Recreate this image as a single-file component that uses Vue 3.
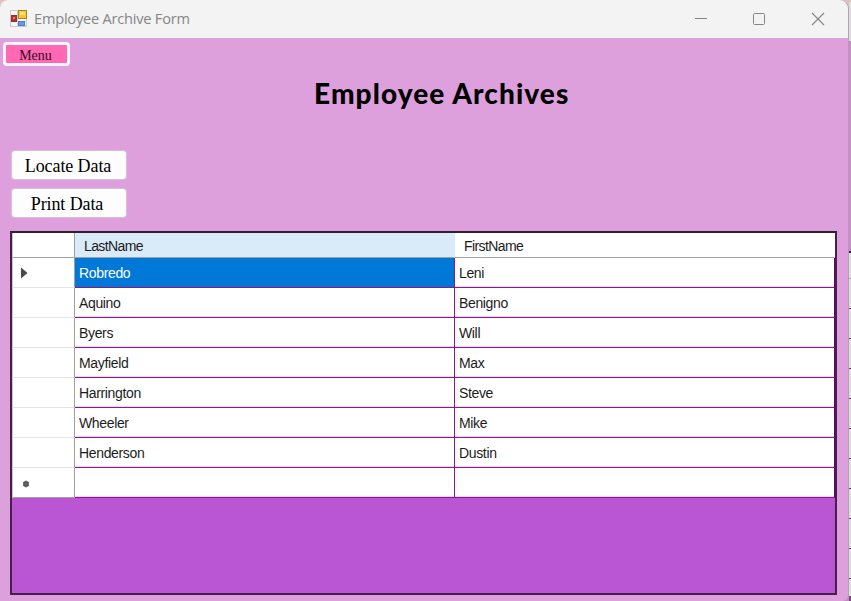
<script setup>
const rows = [
  ['Robredo', 'Leni'],
  ['Aquino', 'Benigno'],
  ['Byers', 'Will'],
  ['Mayfield', 'Max'],
  ['Harrington', 'Steve'],
  ['Wheeler', 'Mike'],
  ['Henderson', 'Dustin'],
  ['', ''],
]
</script>

<template>
  <div class="desktop">
    <div class="window">
      <header class="titlebar">
        <svg class="app-icon" width="19" height="19" viewBox="0 0 19 19">
          <rect x="0.500" y="1.500" width="16" height="16" fill="#f5f5f5" stroke="#c9c9c9" />
          <path d="M7.500 1v16M1 12.500h16" stroke="#cfcfcf" />
          <rect x="8.500" y="1.500" width="8" height="8" fill="#f7c52d" stroke="#a98419" />
          <rect x="10" y="3" width="5" height="3" fill="#ffe17b" />
          <rect x="1.500" y="6.500" width="5" height="6" fill="#c22d2d" stroke="#8d3030" />
          <rect x="3" y="8" width="2" height="2" fill="#ee7a70" />
          <rect x="8.500" y="12.500" width="6" height="4" fill="#6798e8" stroke="#5478bd" />
        </svg>
        <span class="caption">Employee Archive Form</span>
        <svg class="controls" width="140" height="20" viewBox="0 0 140 20" fill="none" stroke="#858585">
          <path d="M5 9.500h12" />
          <rect x="63.500" y="4.500" width="11" height="11" rx="1" />
          <path d="M122 4l12 12M134 4l-12 12" stroke-width="1.100" />
        </svg>
      </header>

      <main class="form">
        <button class="menu">Menu</button>
        <h1>Employee Archives</h1>
        <div class="actions">
          <button class="action locate">Locate Data</button>
          <button class="action print">Print Data</button>
        </div>
        <section class="grid">
          <div class="row head">
            <div class="marker"></div>
            <div class="cell selected-col">LastName</div>
            <div class="cell">FirstName</div>
          </div>
          <div v-for="(row, i) in rows" :key="i" class="row" :class="{ current: i === 0, fresh: i === 7 }">
            <div class="marker">
              <svg v-if="i === 0" width="7" height="12" viewBox="0 0 7 12"><path d="M0 .5L6.500 6L0 11.500z" fill="#484848" /></svg>
              <svg v-if="i === 7" class="star" width="8" height="8" viewBox="0 0 8 8">
                <circle cx="4" cy="4" r="2.900" fill="#505050" />
                <path d="M4 .5v7M.8 2.200l6.400 3.600M.8 5.800l6.400-3.600" stroke="#666" />
              </svg>
            </div>
            <div class="cell first">{{ row[0] }}</div>
            <div class="cell">{{ row[1] }}</div>
          </div>
        </section>
      </main>
    </div>
    <aside class="behind">
      <div class="behind-title"></div>
      <div class="behind-form"></div>
      <div class="behind-head"></div>
      <div v-for="n in 10" :key="n" class="behind-row"></div>
      <div class="behind-rest"></div>
    </aside>
  </div>
</template>

<style>
body {
  overflow: hidden;
}
</style>

<style scoped>
* {
  box-sizing: border-box;
}
.desktop {
  display: flex;
  width: 851px;
  height: 601px;
  background: linear-gradient(#d9c5bd 0 10px, #c18bc2 10px);
}
.window {
  width: 849px;
  height: 601px;
  flex: none;
  display: flex;
  flex-direction: column;
  border-right: 1px solid #b99aba;
  border-radius: 8px 9px 6px 0;
  overflow: hidden;
  background: #dda0dd;
}
.titlebar {
  height: 38px;
  flex: none;
  display: flex;
  align-items: center;
  padding-left: 10px;
  background: #f3f3f3;
}
.app-icon {
  margin-top: -1px;
}
.caption {
  margin: -2px 0 0 5px;
  font: 14.6px/20px "Open Sans", sans-serif;
  letter-spacing: -0.22px;
  color: #858585;
  white-space: nowrap;
}
.controls {
  margin: 0 18px 0 auto;
}
.form {
  flex: 1;
  display: flex;
  flex-direction: column;
  align-items: flex-start;
  padding: 4px 11px 0 3px;
}
button {
  font-family: "Liberation Serif", serif;
  color: #000;
  padding: 0;
  white-space: nowrap;
}
.menu {
  width: 67px;
  height: 24px;
  border: 3px solid #fcf5fb;
  border-radius: 4px;
  background: #ff69b4;
  color: #3c0826;
  font-size: 14px;
  line-height: 18px;
  padding: 2px 2px 0 0;
}
h1 {
  margin: 7px 0 0 311px;
  font: 900 28px/40px Lato, sans-serif;
  letter-spacing: 1.1px;
  color: #000;
  white-space: nowrap;
}
.actions {
  display: grid;
  gap: 8px;
  margin: 37px 0 0 8px;
}
.action {
  width: 116px;
  height: 30px;
  border: 1px solid #d6bfd6;
  border-radius: 4px;
  background: #fdfdfd;
  font-size: 18px;
  line-height: 26px;
  padding: 2px 2px 0 0;
  letter-spacing: -0.1px;
}
.print {
  padding-right: 4px;
}
.grid {
  width: 827px;
  height: 364px;
  margin: 13px 0 0 7px;
  border: 2px solid #46204b;
  border-top-color: #302030;
  background: #ba55d3;
}
.row {
  display: grid;
  grid-template-columns: 63px 380px 380px;
  height: 30px;
  font: 14px/31px "Liberation Sans", sans-serif;
  color: #1c1c1c;
}
.marker {
  background: #fff;
  border-right: 1px solid #a0a0a0;
  border-bottom: 1px solid #e4e4e4;
  border-left: 1px solid #c8c8c8;
  padding-left: 8px;
  display: flex;
  align-items: center;
}
.cell {
  background: #fff;
  border-right: 1px solid #8b178b;
  border-bottom: 1px solid #8b178b;
  padding-left: 4px;
  letter-spacing: -0.35px;
  white-space: nowrap;
  overflow: hidden;
}
.row:not(.head) .cell {
  box-shadow: inset 0 -1px #ecd6ec;
}
.row.current .first {
  background: #0078d7;
  color: #fff;
  box-shadow: none;
}
.cell:last-child {
  border-right: 1px solid #56085a;
}
.head {
  height: 25px;
  line-height: 26px;
}
.head .marker,
.head .cell {
  border-bottom-color: #a0a0a0;
}
.head .cell {
  padding-left: 9px;
  border-right-color: #fff;
  letter-spacing: -0.6px;
}
.head .selected-col {
  background: #d9ebf9;
  border-right-color: #d9ebf9;
}
.fresh .marker {
  border-bottom-color: #a0a0a0;
}
.star {
  margin: 3px 0 0 1px;
}
.behind {
  width: 2px;
  flex: none;
  display: flex;
  flex-direction: column;
}
.behind-title {
  height: 39px;
  margin-top: 2px;
  background: #dedede;
}
.behind-form {
  height: 210px;
  background: #c58cc5;
}
.behind-head {
  height: 28px;
  background: #dedede;
  border-top: 2px solid #302030;
  border-bottom: 1px solid #a0a0a0;
}
.behind-row {
  height: 30px;
  background: #dedede;
  border-bottom: 1px solid #733073;
}
.behind-rest {
  flex: 1;
  background: #dedede;
  border-bottom: 5px solid #7c477f;
}
</style>
